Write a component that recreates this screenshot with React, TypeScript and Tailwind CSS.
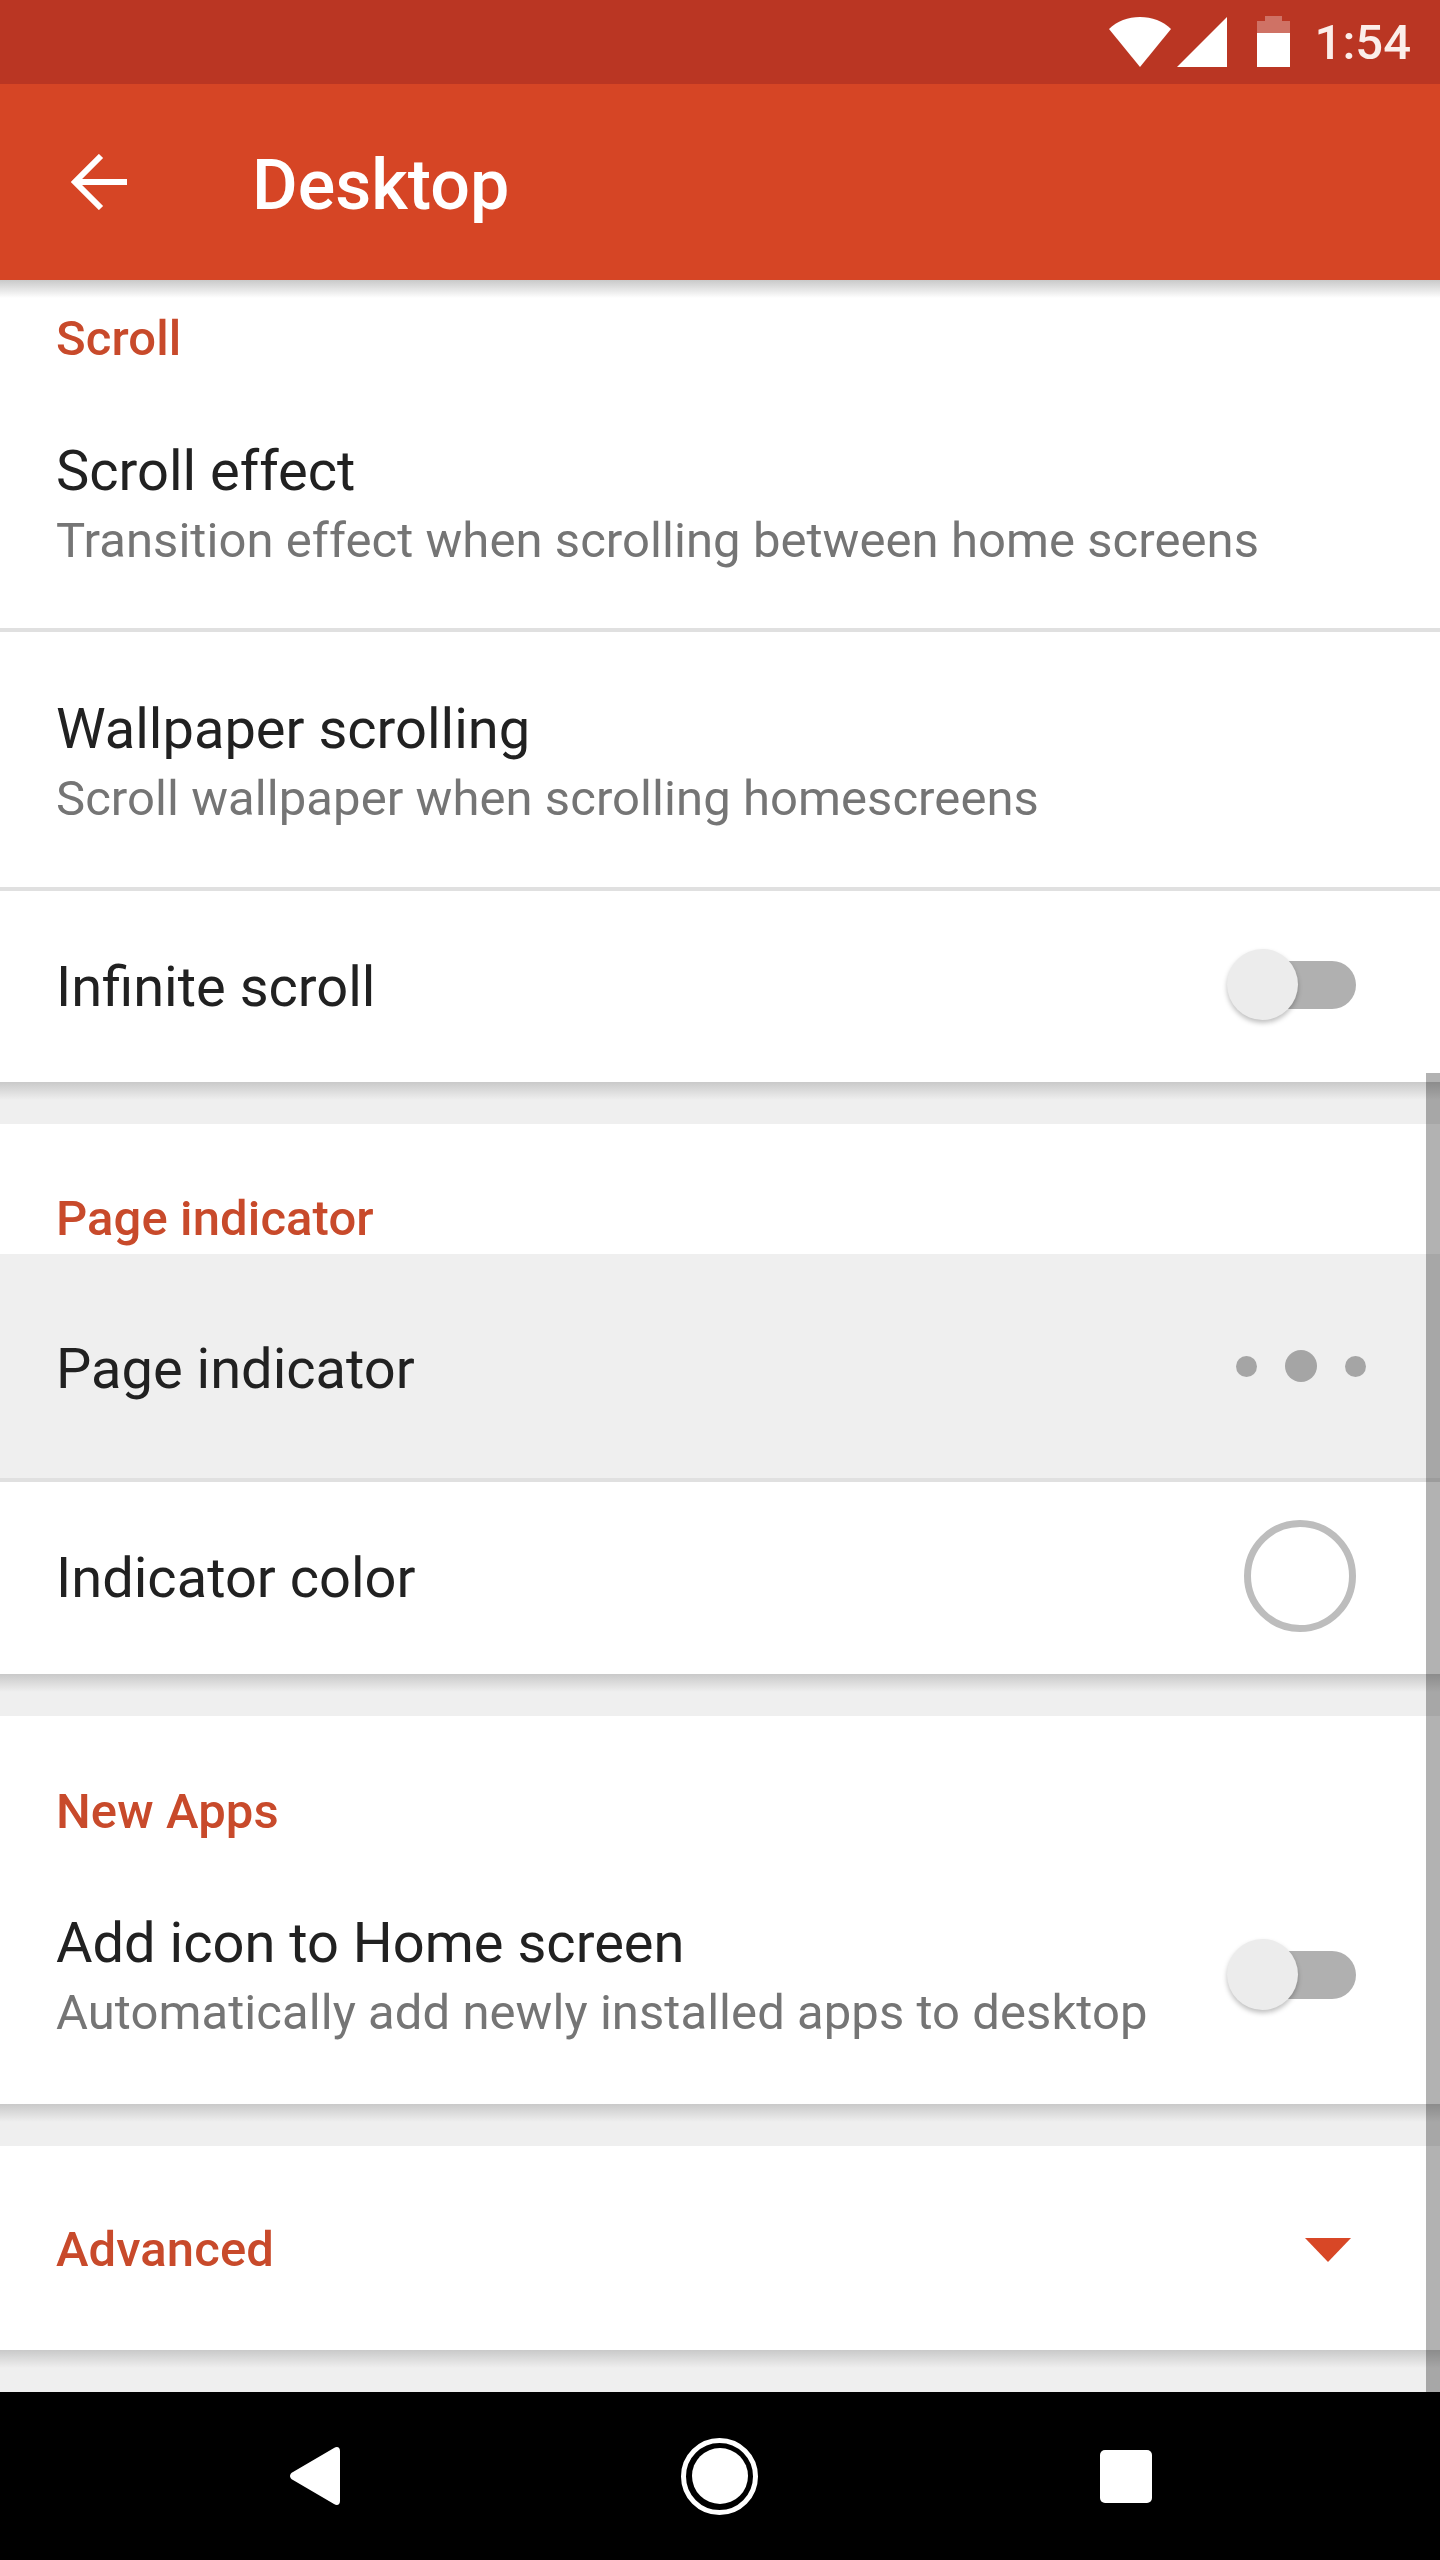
import React from "react";

const FONT = "font-['Roboto',sans-serif]";

// soft shadow that falls below the app bar and the cards
const Shade = ({ to = "to-[#efefef]" }: { to?: string }) => (
  <div className={`h-[18px] bg-linear-to-b from-[#c9c9c9] ${to}`} />
);

const Gap = () => (
  <div className="h-[42px] bg-[#efefef]">
    <Shade />
  </div>
);

const Divider = () => <div className="h-[4px] bg-[#e0e0e0]" />;

const Label = ({ children, className = "" }: { children: React.ReactNode; className?: string }) => (
  <div className={`px-[56px] text-[49px] leading-[56px] font-medium tracking-[0.1px] text-[#c84a2b] ${className}`}>{children}</div>
);

const Title = ({ children }: { children: React.ReactNode }) => (
  <div className="text-[56px] leading-[70px] text-[#212121]">{children}</div>
);

const Sub = ({ children }: { children: React.ReactNode }) => (
  <div className="text-[49px] leading-[70px] tracking-[0.06px] text-[#757575]">{children}</div>
);

const Toggle = () => (
  <div className="flex w-[129px] items-center">
    <div className="relative ml-[10px] h-[48px] w-[119px] rounded-full bg-[#b0b0b0]">
      <div className="absolute -left-[10px] -top-[12px] h-[71px] w-[71px] rounded-full bg-[#ececec] shadow-[0_3px_5px_rgba(0,0,0,0.25)]" />
    </div>
  </div>
);

const StatusBar = () => (
  <div className="flex h-[84px] items-center justify-end bg-[#ba3623] pr-[29px]">
    <svg width="62" height="50" viewBox="0 0 62 50" className="mt-[-1px]">
      <path d="M0 12C8 4 19 0 31 0s23 4 31 12L31 50z" fill="#fff" />
    </svg>
    <svg width="50" height="50" viewBox="0 0 50 50" className="ml-[6px] mt-[-1px]">
      <path d="M50 0v50H0z" fill="#fff" />
    </svg>
    <svg width="33" height="51" viewBox="0 0 33 51" className="ml-[30px] mt-[-1px]">
      <path d="M8 0h17v5h8v12H0V5h8z" fill="#fff" fillOpacity="0.3" />
      <path d="M0 17h33v34H0z" fill="#fff" />
    </svg>
    <span className="ml-[25px] text-[49px] leading-none font-medium text-[#fbeeea]">1:54</span>
  </div>
);

const AppBar = () => (
  <div className="flex h-[196px] items-center bg-[#d64525] pl-[71px]">
    <svg width="56" height="56" viewBox="0 0 56 56" fill="none" stroke="#fff" strokeWidth="6">
      <path d="M56 28H4M30 2L4 28l26 26" />
    </svg>
    <div className="ml-[125px] mt-[6px] text-[70px] leading-none font-medium text-white">Desktop</div>
  </div>
);

const NavBar = () => (
  <div className="flex h-[168px] items-center bg-black">
    <svg width="50" height="58" viewBox="0 0 50 58" className="ml-[290px]">
      <path d="M44 1c3-2 6-1 6 3v50c0 4-3 5-6 3L3 33c-4-2-4-6 0-8z" fill="#fff" />
    </svg>
    <div className="ml-[341px] flex h-[77px] w-[77px] items-center justify-center rounded-full border-[5px] border-white">
      <div className="h-[56px] w-[56px] rounded-full bg-white" />
    </div>
    <div className="ml-[342px] h-[53px] w-[52px] rounded-[5px] bg-white" />
  </div>
);

export default function App() {
  return (
    <div className={`relative flex h-[2560px] w-[1440px] flex-col overflow-hidden bg-white ${FONT}`}>
      <StatusBar />
      <AppBar />

      <Shade to="to-white" />
      <Label className="mt-[13px]">Scroll</Label>
      <div className="h-[261px] px-[56px] pt-[69px]">
        <Title>Scroll effect</Title>
        <Sub>Transition effect when scrolling between home screens</Sub>
      </div>
      <Divider />
      <div className="h-[255px] px-[56px] pt-[62px]">
        <Title>Wallpaper scrolling</Title>
        <Sub>Scroll wallpaper when scrolling homescreens</Sub>
      </div>
      <Divider />
      <div className="flex h-[191px] items-center justify-between pl-[56px] pr-[84px]">
        <Title>Infinite scroll</Title>
        <div className="mb-[4px]">
          <Toggle />
        </div>
      </div>
      <Gap />

      <Label className="mt-[67px]">Page indicator</Label>
      <div className="mt-[7px] flex h-[224px] items-center justify-between bg-[#efefef] pl-[56px] pr-[74px]">
        <div className="pt-[6px]">
          <Title>Page indicator</Title>
        </div>
        <div className="flex items-center gap-[28px]">
          <div className="h-[21px] w-[21px] rounded-full bg-[#a5a5a5]" />
          <div className="h-[32px] w-[32px] rounded-full bg-[#a5a5a5]" />
          <div className="h-[21px] w-[21px] rounded-full bg-[#a5a5a5]" />
        </div>
      </div>
      <Divider />
      <div className="flex h-[192px] items-center justify-between pl-[56px] pr-[84px]">
        <Title>Indicator color</Title>
        <div className="mb-[4px] h-[112px] w-[112px] rounded-full border-[7px] border-[#bdbdbd]" />
      </div>
      <Gap />

      <Label className="mt-[68px]">New Apps</Label>
      <div className="flex h-[264px] items-center justify-between pl-[56px] pr-[84px] pt-[6px]">
        <div className="pt-[6px]">
          <Title>Add icon to Home screen</Title>
          <Sub>Automatically add newly installed apps to desktop</Sub>
        </div>
        <Toggle />
      </div>
      <Gap />

      <div className="flex h-[204px] items-center justify-between pr-[89px] pt-[4px]">
        <Label>Advanced</Label>
        <svg width="46" height="24" viewBox="0 0 46 24">
          <path d="M0 0h46L23 24z" fill="#d84726" />
        </svg>
      </div>
      <Gap />

      <NavBar />

      {/* scrollbar thumb sits over the list */}
      <div className="absolute right-0 top-[1073px] h-[1319px] w-[14px] bg-black/30" />
    </div>
  );
}
